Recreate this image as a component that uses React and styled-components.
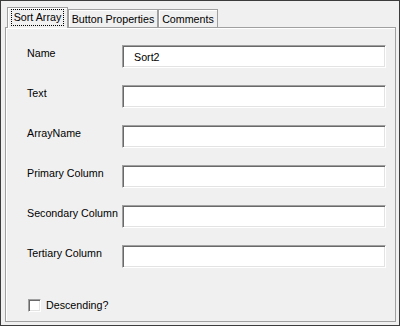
import { Fragment } from "react";
import styled, { createGlobalStyle } from "styled-components";

const GlobalStyle = createGlobalStyle`
  body {
    margin: 0;
    background: #f0f0f0;
    font-family: "Liberation Sans", Arial, sans-serif;
    font-size: 10.7px;
    color: #000;
  }
`;

const Window = styled.div`
  width: 400px;
  height: 326px;
  box-sizing: border-box;
  border: 1px solid #3c3c3c;
  background: #f0f0f0;
  padding: 6px 3px 3px 4px;
  display: flex;
  flex-direction: column;
`;

const TabStrip = styled.div`
  display: flex;
  align-items: flex-end;
  height: 20px;
  padding-left: 2px;
`;

const Tab = styled.div`
  position: relative;
  z-index: ${({ $active }) => ($active ? 1 : 0)};
  box-sizing: border-box;
  width: ${({ $width }) => $width}px;
  height: ${({ $active }) => ($active ? "21px" : "18px")};
  margin-bottom: ${({ $active }) => ($active ? "-1px" : "0")};
  padding-top: ${({ $active }) => ($active ? "2px" : "0")};
  border: 1px solid #a0a0a0;
  border-bottom: none;
  background: #f0f0f0;
  box-shadow: inset 1px 1px 0 #fff;
  display: flex;
  justify-content: center;
  align-items: ${({ $active }) => ($active ? "flex-start" : "center")};
  white-space: nowrap;
`;

const FocusLabel = styled.span`
  outline: 1px dotted #000;
  padding: 1px 2px;
  line-height: 13px;
`;

const Panel = styled.div`
  flex: 1;
  border: 1px solid #a0a0a0;
  box-shadow: inset 1px 1px 0 #fff;
  padding: 17px 0 0 21px;
  display: flex;
  flex-direction: column;
`;

const Fields = styled.div`
  display: grid;
  grid-template-columns: 95px 264px;
  row-gap: 17px;
`;

const Label = styled.label`
  padding-top: 2px;
  line-height: 13px;
  white-space: nowrap;
`;

const Input = styled.input`
  box-sizing: border-box;
  width: 264px;
  height: 23px;
  margin: 0;
  padding: 0 0 0 11px;
  font-family: inherit;
  font-size: 10.7px;
  color: #000;
  background: #fff;
  border: 1px solid;
  border-color: #a0a0a0 #fff #fff #a0a0a0;
  box-shadow: inset 1px 1px 0 #696969, inset -1px -1px 0 #e3e3e3;
  outline: none;
`;

const CheckRow = styled.label`
  display: flex;
  align-items: center;
  gap: 5px;
  margin-top: 31px;
  padding-left: 1px;
  line-height: 13px;
`;

const CheckBox = styled.span`
  box-sizing: border-box;
  width: 13px;
  height: 13px;
  background: #fff;
  border: 1px solid;
  border-color: #a0a0a0 #fff #fff #a0a0a0;
  box-shadow: inset 1px 1px 0 #696969, inset -1px -1px 0 #e3e3e3;
`;

const fields = [
  { name: "Name", value: "Sort2" },
  { name: "Text", value: "" },
  { name: "ArrayName", value: "" },
  { name: "Primary Column", value: "" },
  { name: "Secondary Column", value: "" },
  { name: "Tertiary Column", value: "" },
];

export default function App() {
  return (
    <>
      <GlobalStyle />
      <Window>
        <TabStrip>
          <Tab $active $width={61}>
            <FocusLabel>Sort Array</FocusLabel>
          </Tab>
          <Tab $width={90}>Button Properties</Tab>
          <Tab $width={60}>Comments</Tab>
        </TabStrip>
        <Panel>
          <Fields>
            {fields.map((f) => (
              <Fragment key={f.name}>
                <Label>{f.name}</Label>
                <Input defaultValue={f.value} />
              </Fragment>
            ))}
          </Fields>
          <CheckRow>
            <CheckBox />
            Descending?
          </CheckRow>
        </Panel>
      </Window>
    </>
  );
}
